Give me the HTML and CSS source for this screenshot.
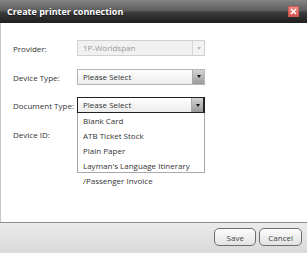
FILE: index.html
```html
<!DOCTYPE html>
<html lang="en">
<head>
  <meta charset="UTF-8">
  <meta name="viewport" content="width=device-width, initial-scale=1.0">
  <title>Create printer connection</title>
  <link rel="stylesheet" href="styles.css">
</head>
<body>
  <div class="dialog">
    <div class="titlebar">
      <span class="title">Create printer connection</span>
      <span class="close">
        <svg width="7" height="7" viewBox="0 0 7 7"><path d="M1 1L6 6M6 1L1 6" stroke="#fff" stroke-width="1.6"/></svg>
      </span>
    </div>

    <div class="content">
      <div class="row">
        <label>Provider:</label>
        <div class="select disabled">
          <span class="value">1P-Worldspan</span>
          <span class="arrow"><i></i></span>
        </div>
      </div>

      <div class="row">
        <label>Device Type:</label>
        <div class="select">
          <span class="value">Please Select</span>
          <span class="arrow"><i></i></span>
        </div>
      </div>

      <div class="row">
        <label>Document Type:</label>
        <div class="select focused">
          <span class="value">Please Select</span>
          <span class="arrow"><i></i></span>
          <!-- open list of the focused select -->
          <ul class="options">
            <li>Blank Card</li>
            <li>ATB Ticket Stock</li>
            <li>Plain Paper</li>
            <li>Layman's Language Itinerary<wbr>/Passenger Invoice</li>
          </ul>
        </div>
      </div>

      <div class="row">
        <label>Device ID:</label>
        <div class="input"></div>
      </div>
    </div>

    <div class="footer">
      <button>Save</button>
      <button>Cancel</button>
    </div>
  </div>
</body>
</html>
```

FILE: styles.css
```css
body {
  margin: 0;
  font-family: 'Open Sans', sans-serif;
  font-size: 8px;
  color: #333;
  background: #fff;
}
.dialog {
  display: flex;
  flex-direction: column;
  width: 307px;
  height: 253px;
}
.titlebar {
  display: flex;
  align-items: center;
  justify-content: space-between;
  height: 23px;
  padding: 0 8px 0 7px;
  box-sizing: border-box;
  background: linear-gradient(#858585, #5e5e5e 45%, #3a3a3a 55%, #1f1f1f);
}
.title {
  color: #fff;
  font-weight: bold;
  font-size: 9px;
  text-shadow: 0 1px 1px rgba(0,0,0,0.6);
}
.close {
  display: flex;
  align-items: center;
  justify-content: center;
  width: 11px;
  height: 11px;
  box-sizing: border-box;
  border: 1px solid #c65a55;
  background: linear-gradient(#f08a84, #d9544e);
}
.content {
  flex: 1;
  display: flex;
  flex-direction: column;
  gap: 12.5px;
  padding: 17px 0 0 12px;
  border-left: 1px solid #c8c8c8;
}
.row {
  display: flex;
  align-items: center;
  height: 16px;
}
.row label {
  width: 64px;
  flex: none;
  padding-top: 1px;
}
.select, .input {
  position: relative;
  display: flex;
  width: 128px;
  height: 16px;
  box-sizing: border-box;
  border: 1px solid #b5b5b5;
  background: linear-gradient(#fff, #ececec);
}
.select .value {
  flex: 1;
  padding-left: 5px;
  line-height: 14px;
  color: #333;
}
.select .arrow {
  display: flex;
  align-items: center;
  justify-content: center;
  width: 11px;
  border-left: 1px solid #aaa;
  background: linear-gradient(#d4d4d4, #9a9a9a);
}
.select .arrow i {
  width: 0;
  height: 0;
  border-left: 2.5px solid transparent;
  border-right: 2.5px solid transparent;
  border-top: 3px solid #111;
}
.select.disabled {
  border-color: #d0d0d0;
  background: #f1f1f1;
}
.select.disabled .value {
  color: #9a9a9a;
}
.select.disabled .arrow {
  background: #f3f3f3;
  border-left-color: #d6d6d6;
}
.select.disabled .arrow i {
  border-top-color: #bbb;
}
.select.focused {
  border: 1px solid #222;
  border-right-width: 2px;
}
.input {
  background: #fff;
}
.options {
  position: absolute;
  top: 15px;
  left: -1px;
  width: 128px;
  height: 60px;
  margin: 0;
  padding: 0;
  list-style: none;
  box-sizing: border-box;
  border: 1px solid #a8a8a8;
  border-top: none;
  background: #fff;
  z-index: 2;
}
.options li {
  padding-left: 5px;
  line-height: 15px;
}
.footer {
  display: flex;
  justify-content: flex-end;
  gap: 3px;
  height: 31px;
  padding: 5px 5px 0 0;
  box-sizing: border-box;
  border-top: 1px solid #8a8a8a;
  background: linear-gradient(#ebebeb, #d9d9d9);
}
.footer button {
  height: 18px;
  padding: 0 8px;
  min-width: 42px;
  font-family: inherit;
  font-size: 8px;
  color: #444;
  border: 1px solid #6e6e6e;
  border-radius: 5px;
  background: linear-gradient(#fdfdfd, #e2e2e2);
}
```
